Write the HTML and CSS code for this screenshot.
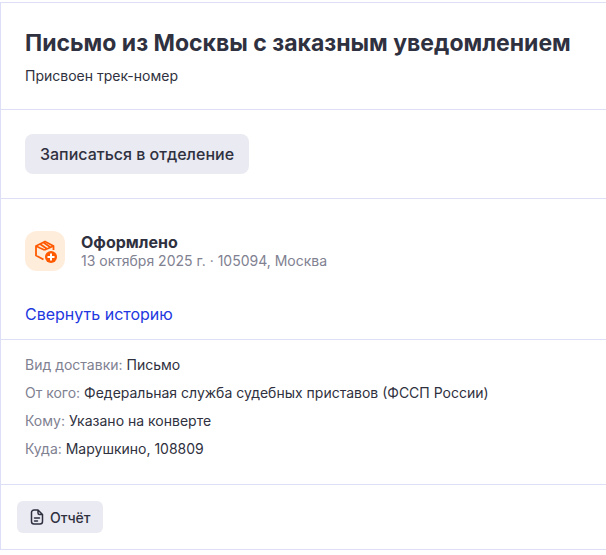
FILE: index.html
```html
<!DOCTYPE html>
<html lang="ru">
<head>
  <meta charset="UTF-8">
  <meta name="viewport" content="width=device-width, initial-scale=1.0">
  <title>Письмо из Москвы с заказным уведомлением</title>
  <link rel="stylesheet" href="styles.css">
</head>
<body>
  <main class="tracking-card">
    <header class="section">
      <h1 class="title">Письмо из Москвы с заказным уведомлением</h1>
      <p class="subtitle">Присвоен трек-номер</p>
    </header>

    <section class="section">
      <button type="button" class="btn btn-large">Записаться в отделение</button>
    </section>

    <section class="section history">
      <div class="status">
        <div class="status-icon">
          <svg width="24" height="24" viewBox="0 0 24 24" fill="none" aria-hidden="true">
            <g stroke="#ff5a00" stroke-width="1.800" stroke-linejoin="round">
              <path d="M10.500 20.500L3 16.500V7l9-4.500L20.500 7v4"/>
              <path d="M3 7l4 2M11.500 11L20.500 7M7 5l6.500 4.500M10.500 3.500l6.500 4.500M7 9l4.500 2"/>
            </g>
            <circle cx="18" cy="18" r="6" fill="#ff5a00"/>
            <path d="M18 14.500v7M14.500 18h7" stroke="#fff" stroke-width="2"/>
          </svg>
        </div>
        <div class="status-text">
          <p class="status-name">Оформлено</p>
          <p class="status-place">13 октября 2025 г. · 105094, Москва</p>
        </div>
      </div>
      <a href="#" class="history-link">Свернуть историю</a>
    </section>

    <section class="section details">
      <dl class="details-list">
        <div class="details-row"><dt>Вид доставки:</dt> <dd>Письмо</dd></div>
        <div class="details-row"><dt>От кого:</dt> <dd>Федеральная служба судебных приставов (ФССП России)</dd></div>
        <div class="details-row"><dt>Кому:</dt> <dd>Указано на конверте</dd></div>
        <div class="details-row"><dt>Куда:</dt> <dd>Марушкино, 108809</dd></div>
      </dl>
    </section>

    <footer class="section report">
      <button type="button" class="btn btn-small">
        <svg width="16" height="16" viewBox="0 0 16 16" fill="none" stroke="#2f3140" stroke-width="1.500" stroke-linecap="round" stroke-linejoin="round" aria-hidden="true">
          <path d="M9 1H5a2.500 2.500 0 0 0-2.500 2.500v9A2.500 2.500 0 0 0 5 15h6a2.500 2.500 0 0 0 2.500-2.500v-7L9 1v3a1.500 1.500 0 0 0 1.500 1.500h3M5.500 9h5M5.500 12h3"/>
        </svg>
        Отчёт
      </button>
    </footer>
  </main>
</body>
</html>
```
FILE: styles.css
```css
* {
  box-sizing: border-box;
}

body {
  margin: 0;
  background: #fff;
  color: #2f3140;
  font-family: Inter, "Noto Sans", sans-serif;
  font-size: 14px;
  line-height: 18px;
}

h1,
p,
dl,
dd {
  margin: 0;
}

.tracking-card {
  margin-top: 2px;
  border-top: 1px solid #dcdff5;
  border-left: 1px solid #dcdff5;
}

.section {
  padding: 24px;
  border-bottom: 1px solid #dcdff5;
}

.title {
  margin-bottom: 8px;
  font-size: 23px;
  font-weight: 700;
  line-height: 32px;
}

/* Buttons */
.btn {
  display: inline-flex;
  align-items: center;
  justify-content: center;
  border: none;
  background: #eaeaf2;
  color: inherit;
  font-family: inherit;
  font-weight: 500;
  cursor: pointer;
}

.btn-large {
  height: 40px;
  padding: 0 15px;
  border-radius: 8px;
  font-size: 16px;
}

.btn-small {
  height: 32px;
  gap: 5px;
  padding: 0 12px;
  border-radius: 6px;
  font-size: 14px;
}

/* Status and history */
.history {
  display: flex;
  flex-direction: column;
  align-items: flex-start;
  gap: 32px;
  padding-top: 32px;
  padding-bottom: 14px;
}

.status {
  display: flex;
  align-items: center;
  gap: 16px;
}

.status-icon {
  display: flex;
  align-items: center;
  justify-content: center;
  flex-shrink: 0;
  width: 40px;
  height: 40px;
  border-radius: 12px;
  background: #ffeddc;
}

.status-name {
  font-size: 16px;
  font-weight: 700;
  line-height: 20px;
}

.status-place {
  color: #808191;
}

.history-link {
  color: #2238e0;
  font-size: 16px;
  line-height: 22px;
  text-decoration: none;
}

/* Delivery details */
.details {
  padding-top: 16px;
  padding-bottom: 26px;
}

.details-list {
  display: flex;
  flex-direction: column;
  gap: 10px;
}

.details-row dt,
.details-row dd {
  display: inline;
}

.details-row dt {
  color: #808191;
}

.report {
  display: flex;
  padding: 16px;
}
```
